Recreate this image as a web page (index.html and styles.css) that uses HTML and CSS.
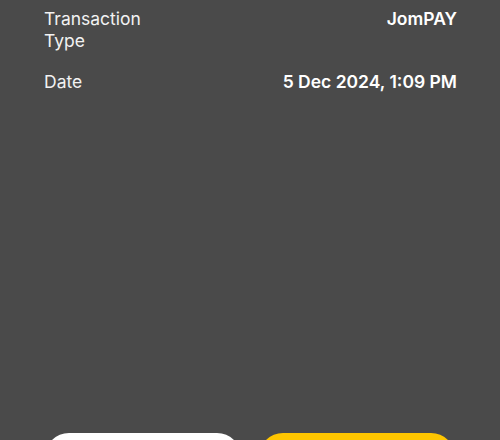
FILE: index.html
```html
<!DOCTYPE html>
<html lang="en">
<head>
    <meta charset="UTF-8">
    <meta name="viewport" content="width=device-width, initial-scale=1.0">
    <title>Transaction Details</title>
    <link rel="stylesheet" href="styles.css">
</head>
<body>
  <div class="screen">
     <div class="details">
        <div class="row">
           <p class="label">Transaction Type</p>
           <p class="value">JomPAY</p>
        </div>
        <div class="row">
           <p class="label">Date</p>
           <p class="value">5 Dec 2024, 1:09 PM</p>
        </div>
     </div>
     <div class="actions">
        <button class="btn btn-light" type="button" aria-label="Share"></button>
        <button class="btn btn-primary" type="button" aria-label="Done"></button>
     </div>
  </div>
</body>
</html>
```

FILE: styles.css
```css
* {
  margin: 0;
  padding: 0;
  box-sizing: border-box;
  font-family: "Inter", "DejaVu Sans", sans-serif;
}

body {
  background-color: #4a4a4a;
  overflow: hidden;
}

.screen {
  height: 500px;
  display: flex;
  flex-direction: column;
}

.details {
  padding: 8px 43px 0 44px;
  display: flex;
  flex-direction: column;
  gap: 19px;
}

.row {
  display: flex;
  justify-content: space-between;
  align-items: flex-start;
}

.label {
  color: #f2f2f2;
  font-size: 17.5px;
  line-height: 22px;
  max-width: 130px;
}

.value {
  color: #ffffff;
  font-size: 17.5px;
  line-height: 22px;
  font-weight: 600;
  text-align: right;
}

.actions {
  margin-top: auto;
  padding: 0 45px 19px 45px;
  display: flex;
  gap: 18px;
}

.btn {
  flex: 1;
  height: 48px;
  border: none;
  border-radius: 24px;
}

.btn-light {
  background-color: #ffffff;
}

.btn-primary {
  background-color: #ffc600;
}
```
